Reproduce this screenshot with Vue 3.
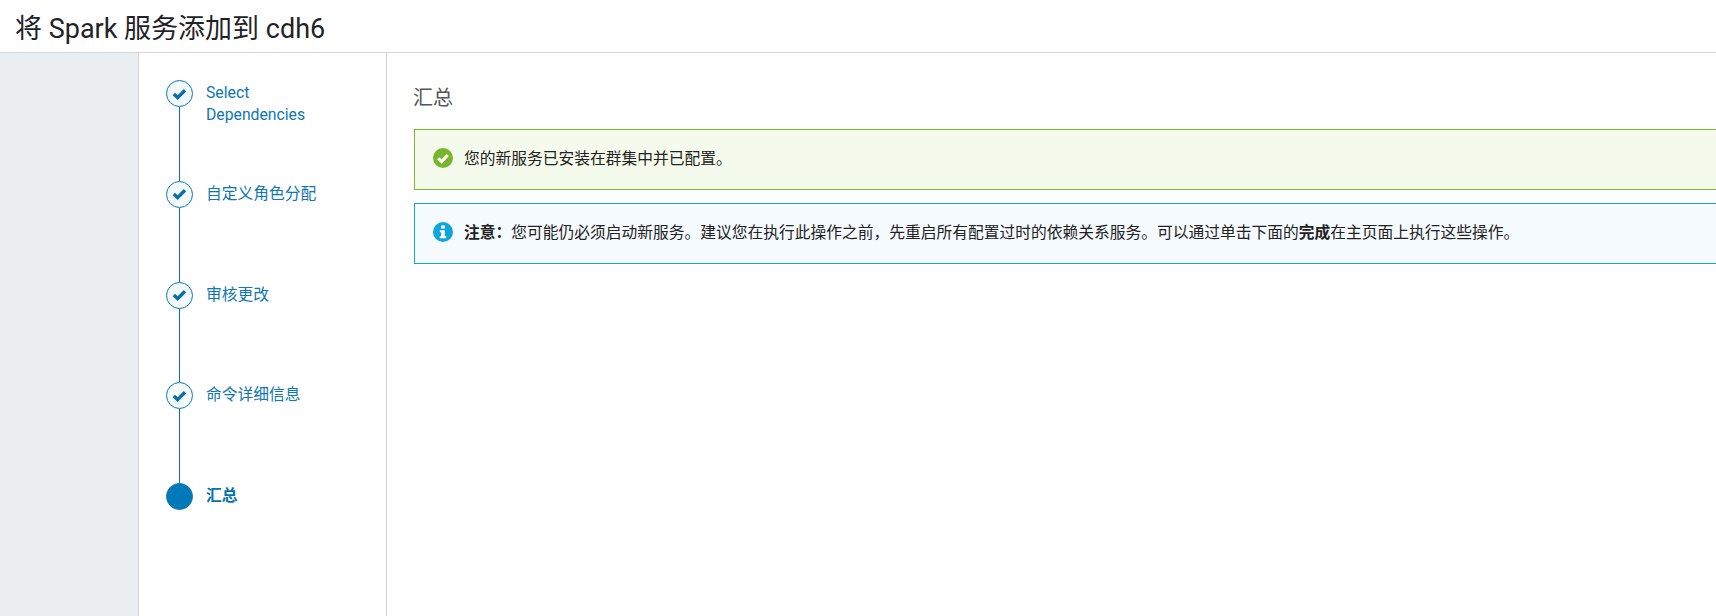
<script setup>
const steps = [
  { label: 'Select Dependencies', done: true },
  { label: '自定义角色分配', done: true },
  { label: '审核更改', done: true },
  { label: '命令详细信息', done: true },
  { label: '汇总', done: false },
]
</script>

<template>
  <div class="page">
    <header class="page-header">
      <h1>将 Spark 服务添加到 cdh6</h1>
    </header>
    <div class="wizard">
      <aside class="gutter"></aside>
      <nav class="steps">
        <div v-for="(step, i) in steps" :key="step.label" class="step" :class="{ current: !step.done }">
          <div class="rail">
            <span class="bullet">
              <svg v-if="step.done" width="15" height="12" viewBox="0 0 15 12">
                <path d="M1.8 6 L5.6 9.6 L13 2.2" fill="none" stroke="#0b6ea8" stroke-width="3.4" />
              </svg>
            </span>
            <span v-if="i < steps.length - 1" class="line"></span>
          </div>
          <div class="step-label">{{ step.label }}</div>
        </div>
      </nav>
      <main class="content">
        <h2>汇总</h2>
        <div class="alert alert-ok">
          <svg class="alert-icon" width="20" height="20" viewBox="0 0 20 20">
            <circle cx="10" cy="10" r="10" fill="#78b52a" />
            <path d="M5.2 10.4 L8.6 13.6 L14.8 7" fill="none" stroke="#fff" stroke-width="3" />
          </svg>
          <span>您的新服务已安装在群集中并已配置。</span>
        </div>
        <div class="alert alert-info">
          <svg class="alert-icon" width="20" height="20" viewBox="0 0 20 20">
            <circle cx="10" cy="10" r="10" fill="#0ea5dc" />
            <rect x="8.2" y="3.4" width="3.6" height="3.2" fill="#fff" />
            <path d="M6.8 8.2 H11.8 V14 H13.2 V16.2 H6.8 V14 H8.2 V10.2 H6.8 Z" fill="#fff" />
          </svg>
          <span><strong>注意：</strong>您可能仍必须启动新服务。建议您在执行此操作之前，先重启所有配置过时的依赖关系服务。可以通过单击下面的<strong>完成</strong>在主页面上执行这些操作。</span>
        </div>
      </main>
    </div>
  </div>
</template>

<style scoped>
.page {
  height: 616px;
  display: flex;
  flex-direction: column;
  overflow: hidden;
  background: #fff;
  color: #222;
  font-family: Roboto, "Noto Sans CJK SC", sans-serif;
}

.page-header {
  height: 52px;
  flex: none;
  display: flex;
  align-items: center;
  padding-left: 15px;
  border-bottom: 1px solid #d5d7db;
}

.page-header h1 {
  margin: 0;
  font-size: 27px;
  font-weight: 400;
  color: #1f2328;
}

.wizard {
  flex: 1;
  display: flex;
  min-height: 0;
}

.gutter {
  width: 138px;
  flex: none;
  background: #eaeef1;
  border-right: 1px solid #d5d7db;
}

.steps {
  width: 248px;
  flex: none;
  box-sizing: border-box;
  padding: 27px 0 0 27px;
  border-right: 1px solid #d5d7db;
}

.step {
  height: 100.75px;
  display: flex;
  gap: 13px;
}

.rail {
  width: 27px;
  display: flex;
  flex-direction: column;
  align-items: center;
}

.bullet {
  width: 27px;
  height: 27px;
  flex: none;
  box-sizing: border-box;
  display: flex;
  align-items: center;
  justify-content: center;
  border: 1px solid #0b79b5;
  border-radius: 50%;
  background: #f4f9fd;
}

.line {
  flex: 1;
  width: 1px;
  background: #0b6ea8;
}

.step.current .bullet {
  background: #0079b8;
}

.step-label {
  width: 125px;
  padding-top: 2px;
  font-size: 15.75px;
  line-height: 22px;
  color: #0e76b0;
}

.step.current .step-label {
  font-weight: 700;
  color: #0072ad;
}

.content {
  flex: 1;
  min-width: 0;
  padding: 32px 0 0 27px;
}

.content h2 {
  margin: 0 0 17px -1px;
  font-size: 20px;
  line-height: 27px;
  font-weight: 400;
  color: #555;
}

.alert {
  height: 61px;
  box-sizing: border-box;
  margin: 0 -10px 13px 0;
  padding: 0 18px 4px;
  display: flex;
  align-items: center;
  gap: 11px;
  font-size: 15.75px;
  color: #222;
  border: 1px solid;
}

.alert-icon {
  flex: none;
}

.alert-ok {
  background: #f4fbec;
  border-color: #7db82e;
}

.alert-info {
  background: #f5faff;
  border-color: #14a3d8;
}
</style>
